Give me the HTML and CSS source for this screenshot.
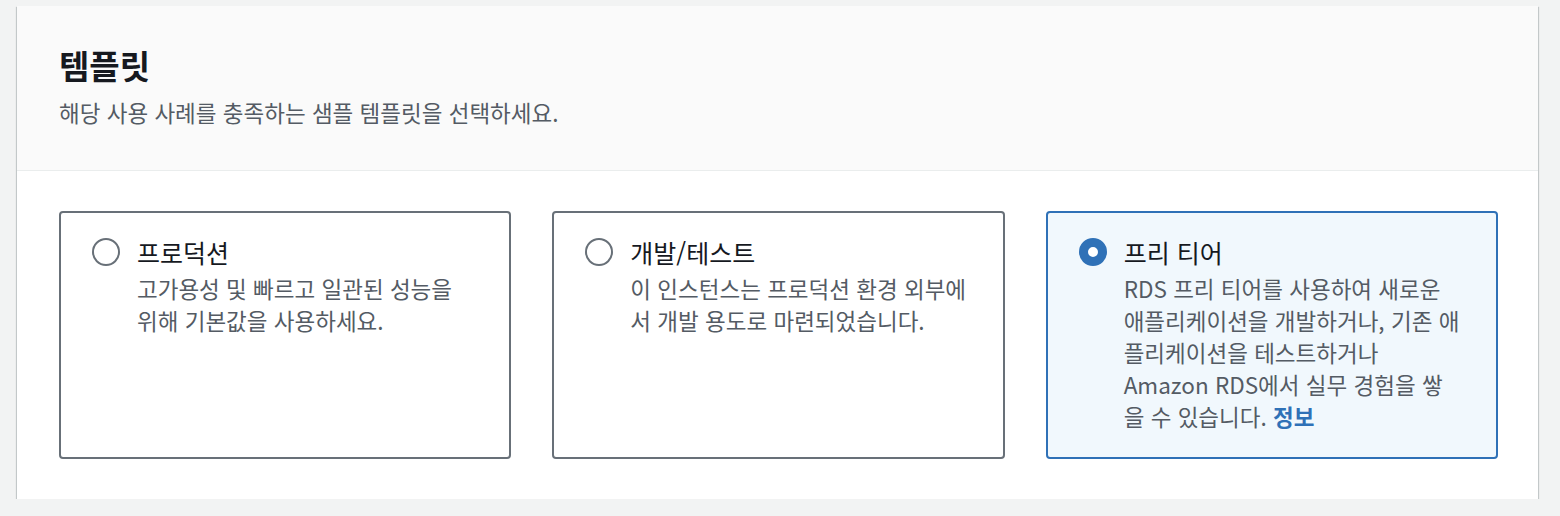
FILE: index.html
```html
<!DOCTYPE html>
<html lang="ko">
<head>
  <meta charset="UTF-8" />
  <meta name="viewport" content="width=device-width, initial-scale=1.0" />
  <title>템플릿</title>
  <link rel="stylesheet" href="styles.css">
</head>
<body>

  <div class="painel">
    <div class="painel-topo">
      <h2>템플릿</h2>
      <p>해당 사용 사례를 충족하는 샘플 템플릿을 선택하세요.</p>
    </div>

    <div class="opcoes">
      <label class="opcao">
        <span class="opcao-titulo">
          <span class="radio"></span>
          프로덕션
        </span>
        <span class="opcao-desc">고가용성 및 빠르고 일관된 성능을<br>위해 기본값을 사용하세요.</span>
      </label>

      <label class="opcao">
        <span class="opcao-titulo">
          <span class="radio"></span>
          개발/테스트
        </span>
        <span class="opcao-desc">이 인스턴스는 프로덕션 환경 외부에<br>서 개발 용도로 마련되었습니다.</span>
      </label>

      <label class="opcao selecionada">
        <span class="opcao-titulo">
          <span class="radio"></span>
          프리 티어
        </span>
        <span class="opcao-desc">RDS 프리 티어를 사용하여 새로운<br>애플리케이션을 개발하거나, 기존 애<br>플리케이션을 테스트하거나<br>Amazon RDS에서 실무 경험을 쌓<br>을 수 있습니다. <a href="#">정보</a></span>
      </label>
    </div>
  </div>

</body>
</html>
```

FILE: styles.css
```css
body {
  margin: 0;
  padding: 6px 22px 0 17px;
  background: #f2f3f3;
  font-family: "Noto Sans CJK KR", "Noto Sans", sans-serif;
  color: #16191f;
}
.painel {
  background: #fff;
  box-shadow: 0 1px 1px 0 rgba(0, 28, 36, 0.3), 1px 1px 1px 0 rgba(0, 28, 36, 0.15), -1px 1px 1px 0 rgba(0, 28, 36, 0.15);
}
.painel-topo {
  background: #fafafa;
  border-bottom: 1px solid #eaeded;
  padding: 39px 42px 42px;
}
.painel-topo h2 {
  margin: 0;
  font-size: 33px;
  line-height: 40px;
  font-weight: bold;
}
.painel-topo p {
  margin: 11px 0 0;
  font-size: 22.5px;
  line-height: 32px;
  color: #545b64;
}
.opcoes {
  display: grid;
  grid-template-columns: repeat(3, 1fr);
  gap: 41px;
  padding: 40px 40px 40px 42px;
}
.opcao {
  display: flex;
  flex-direction: column;
  height: 248px;
  box-sizing: border-box;
  border: 2px solid #687078;
  border-radius: 4px;
  padding: 22px 30px 0 31px;
  cursor: pointer;
}
.opcao.selecionada {
  border-color: #2f71b7;
  background: #f1f8fd;
}
.opcao-titulo {
  display: flex;
  align-items: center;
  gap: 17px;
  font-size: 25px;
  line-height: 34px;
}
.radio {
  width: 28px;
  height: 28px;
  box-sizing: border-box;
  border: 2px solid #687078;
  border-radius: 50%;
  background: #fff;
}
.selecionada .radio {
  border: 9px solid #2f71b7;
}
.opcao-desc {
  margin-top: 3px;
  padding-left: 45px;
  font-size: 22.5px;
  line-height: 32px;
  color: #545b64;
}
.opcao-desc a {
  color: #2f71b7;
  font-weight: bold;
  text-decoration: none;
}
```
